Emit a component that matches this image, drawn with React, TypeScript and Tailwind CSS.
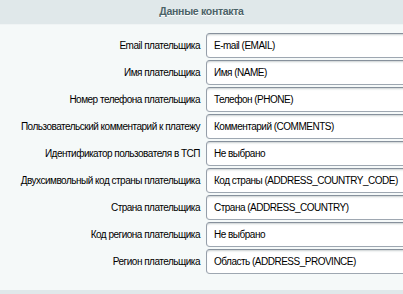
const rows = [
  { label: 'Email плательщика', value: 'E-mail (EMAIL)' },
  { label: 'Имя плательщика', value: 'Имя (NAME)' },
  { label: 'Номер телефона плательщика', value: 'Телефон (PHONE)' },
  { label: 'Пользовательский комментарий к платежу', value: 'Комментарий (COMMENTS)' },
  { label: 'Идентификатор пользователя в ТСП', value: 'Не выбрано' },
  { label: 'Двухсимвольный код страны плательщика', value: 'Код страны (ADDRESS_COUNTRY_CODE)' },
  { label: 'Страна плательщика', value: 'Страна (ADDRESS_COUNTRY)' },
  { label: 'Код региона плательщика', value: 'Не выбрано' },
  { label: 'Регион плательщика', value: 'Область (ADDRESS_PROVINCE)' },
];

export default function App() {
  return (
    <div className="w-[403px] h-[294px] overflow-hidden bg-[#f5f9f9] font-['Liberation_Sans',Arial,sans-serif] flex flex-col">
      <div className="h-[25px] shrink-0 bg-[#e0e8ea] border-b border-[#f0f4f5] flex items-center justify-center text-[10.5px] tracking-[-0.3px] font-bold text-[#4b6267] [text-shadow:0_1px_#fff]">
        Данные контакта
      </div>
      <div className="flex flex-col gap-[2px] pt-[8px]">
        {rows.map((r) => (
          <Row key={r.label} label={r.label} value={r.value} />
        ))}
      </div>
      <div className="mt-auto h-[4px] bg-[#e0e8ea]" />
    </div>
  );
}

function Row({ label, value }: { label: string; value: string }) {
  return (
    <div className="flex items-center h-[25px]">
      <div className="w-[200px] shrink-0 text-right text-[10px] tracking-[-0.5px] text-black whitespace-nowrap">{label}</div>
      <div className="ml-[6px] w-[240px] shrink-0 h-[25px] bg-white rounded-[4px] border border-[#959ea9] border-t-[#87919c] border-b-[#9ea7b1] shadow-[inset_0_2px_2px_-1px_rgba(180,188,191,0.7)] flex items-center px-[7px] text-[10px] tracking-[-0.5px] text-black whitespace-nowrap">
        {value}
      </div>
    </div>
  );
}
